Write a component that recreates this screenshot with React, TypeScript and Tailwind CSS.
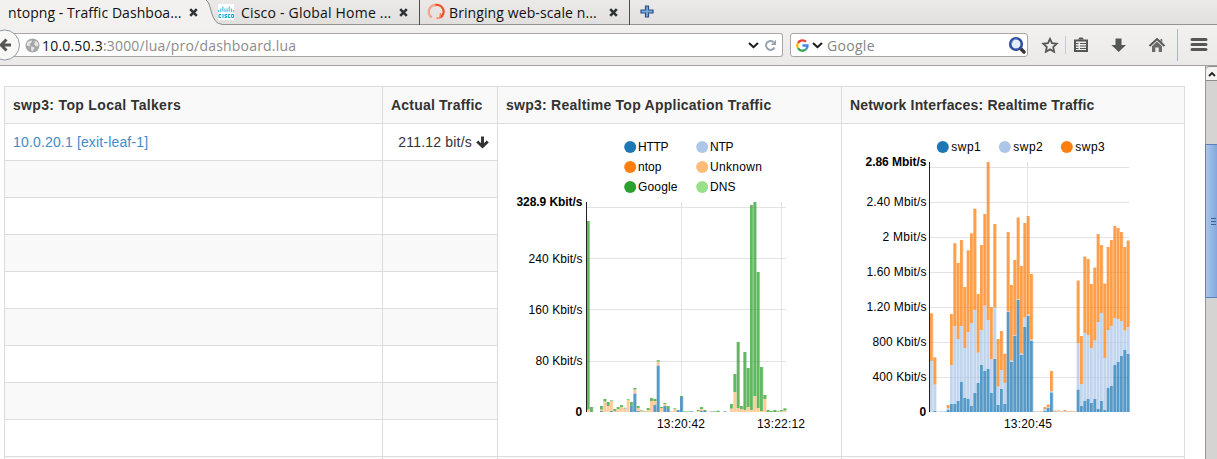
import React from "react";

type Triple = [number, number, number];

// Layer heights per sample: HTTP, Unknown, Google
const appBars: Triple[] = [
  [0, 2.5, 188.5], [0, 0, 5], [0, 0, 0], [0, 0, 0], [1, 1.5, 3.5], [0, 10.5, 2.5],
  [0, 6, 4], [1, 10, 0.7], [0, 1, 2], [0, 3, 2], [0, 5, 2], [0, 3.5, 0.7],
  [0, 12, 0.7], [6.5, 0, 3.5], [18.5, 4, 1.5], [1, 3, 2], [0, 1, 0.7], [0, 0.5, 0.5],
  [0, 2, 2], [0, 11, 3], [7, 4, 2], [46.5, 4, 1.3], [0, 4, 1], [6, 2, 1],
  [3, 0, 3], [0, 1, 0], [0, 3, 0.7], [2, 0, 0], [15, 0, 1], [0, 0, 0.6],
  [0, 0, 0.6], [0.7, 0, 0], [0, 0, 0], [0, 1, 1], [1, 2, 2], [1, 0, 1],
  [0, 0.5, 0], [0.5, 0, 0], [0, 0, 0.7], [0, 0, 1.3], [0, 0, 0], [0.7, 0, 0],
  [0, 0, 0], [0, 3.5, 4.5], [0, 20, 18], [0, 4, 66], [0, 3, 3], [0, 2, 58],
  [0, 5, 39], [0, 2, 205], [0, 16, 194], [0, 4, 136], [0, 1, 44], [0, 13, 4],
  [0, 0, 2], [0, 0, 1], [0, 0, 2], [0, 0.5, 0.7], [0, 0.7, 1.3], [0, 1.5, 2.2],
];

// Cumulative tops per sample: swp1, swp2, swp3
const ifaceTops: Triple[] = [
  [0, 51, 98.7], [1, 27.5, 54.7], [0, 0.5, 0.5], [0, 1, 1], [0, 1, 1], [2, 4, 7],
  [8, 47, 98], [8, 86, 168.7], [11, 73, 149], [30, 86, 172], [14, 64, 125], [13, 80, 161.7],
  [6, 89, 178.7], [19, 102, 203.3], [29, 59.5, 118], [47, 82, 167], [41, 106.5, 198], [43, 92, 250],
  [19, 53, 105], [53, 104.5, 188], [7, 25.5, 73], [23, 42, 81], [8, 29, 58.3], [100, 101, 180],
  [50, 51.5, 127], [76, 77, 152], [112, 113, 194.5], [57, 58.5, 146], [85, 95, 189], [96, 97.5, 196],
  [71, 72.5, 138], [0, 0.7, 1], [0, 0.5, 0.8], [0, 0.5, 1], [1, 3, 5], [4, 5, 7.5],
  [19.5, 21, 41], [0, 0.7, 1.5], [0, 0.7, 1.5], [0, 0.5, 1], [0, 1, 2], [0, 0.5, 1],
  [0, 0.5, 1], [0, 0.5, 1], [22.5, 69, 131.5], [6, 28, 76], [11, 79, 155.5], [13, 77, 153],
  [9, 64, 128], [13, 71.5, 144.5], [3, 90, 178], [11, 99, 167], [2, 54, 128.5], [24, 82, 165],
  [26, 86, 172], [47, 94, 186], [50, 93, 184], [56, 91, 180], [62, 81.5, 165], [58, 85, 171.5],
];

function Bars({ tops, colors, x, base }: { tops: Triple[]; colors: string[]; x: number; base: number }) {
  const step = 200 / 60;
  return (
    <g>
      {tops.map((t, i) => (
        <g key={i}>
          {t.map((top, j) => {
            const low = j ? t[j - 1] : 0;
            const h = top - low;
            if (h <= 0) return null;
            return (
              <React.Fragment key={j}>
                <rect x={x + i * step} y={base - top} width={2.75} height={h} fill={colors[j]} fillOpacity={0.75} />
                <rect x={x + i * step + 2.75} y={base - top} width={step - 2.75} height={h} fill={colors[j]} fillOpacity={0.42} />
              </React.Fragment>
            );
          })}
        </g>
      ))}
    </g>
  );
}

function Label({ x, y, w, bold, end, children }: { x: number; y: number; w: number; bold?: boolean; end?: boolean; children: string }) {
  return (
    <text x={end ? x - w : x} y={y} textLength={w} fontSize={12} fontWeight={bold ? 700 : 400} fill="#000">
      {children}
    </text>
  );
}

function AppChart() {
  const tops = appBars.map(([a, b, c]) => [a, a + b, a + b + c] as Triple);
  const legend: [string, number, number, number, string][] = [
    ["HTTP", 630, 147, 30.5, "#1f77b4"],
    ["NTP", 702, 147, 23.5, "#aec7e8"],
    ["ntop", 630, 167, 23.5, "#ff7f0e"],
    ["Unknown", 702, 167, 52, "#ffbb78"],
    ["Google", 630, 187, 39.5, "#2ca02c"],
    ["DNS", 702, 187, 25.5, "#98df8a"],
  ];
  return (
    <svg className="block h-[332px] w-[343px] font-['Liberation_Sans',Arial,sans-serif]" viewBox="498 124 343 332">
      {legend.map(([name, x, y, w, c]) => (
        <g key={name}>
          <circle cx={x + 0.2} cy={y} r={6} fill={c} />
          <Label x={x + 8} y={y + 4} w={w}>{name}</Label>
        </g>
      ))}
      <g stroke="#e3e3e3" shapeRendering="crispEdges">
        <path d="M587 207.5H786M587 258.5H786M587 309.5H786M587 361.5H786M681.5 202V412M781.5 202V412" />
      </g>
      <Bars tops={tops} colors={["#1f77b4", "#ffbb78", "#2ca02c"]} x={586.7} base={412} />
      <path d="M586.5 202V412" stroke="#222" shapeRendering="crispEdges" />
      <Label x={582.5} y={206} w={66} bold end>328.9 Kbit/s</Label>
      <Label x={582.5} y={262.5} w={54} end>240 Kbit/s</Label>
      <Label x={582.5} y={313.5} w={54} end>160 Kbit/s</Label>
      <Label x={582.5} y={365} w={47} end>80 Kbit/s</Label>
      <Label x={582.5} y={416} w={7} bold end>0</Label>
      <Label x={657} y={428} w={48}>13:20:42</Label>
      <Label x={757} y={428} w={48}>13:22:12</Label>
    </svg>
  );
}

function InterfaceChart() {
  const ticks: [string, number, number][] = [
    ["2.40 Mbit/s", 206, 60],
    ["2 Mbit/s", 241, 44],
    ["1.60 Mbit/s", 276, 60],
    ["1.20 Mbit/s", 311, 60],
    ["800 Kbit/s", 346, 54],
    ["400 Kbit/s", 381, 54],
  ];
  return (
    <svg className="block h-[332px] w-[342px] font-['Liberation_Sans',Arial,sans-serif]" viewBox="842 124 342 332">
      <circle cx={942.8} cy={147} r={6} fill="#1f77b4" />
      <circle cx={1004.8} cy={147} r={6} fill="#aec7e8" />
      <circle cx={1066.8} cy={147} r={6} fill="#ff7f0e" />
      <Label x={951.3} y={151} w={29.5}>swp1</Label>
      <Label x={1013.3} y={151} w={29.5}>swp2</Label>
      <Label x={1075.3} y={151} w={29.5}>swp3</Label>
      <g stroke="#e3e3e3" shapeRendering="crispEdges">
        <path d="M930 167.5H1129M930 202.5H1129M930 237.5H1129M930 272.5H1129M930 307.5H1129M930 342.5H1129M930 377.5H1129M1027.5 162V412" />
      </g>
      <Bars tops={ifaceTops} colors={["#1f77b4", "#aec7e8", "#ff7f0e"]} x={930} base={412} />
      <path d="M929.5 162V412" stroke="#222" shapeRendering="crispEdges" />
      <Label x={926.5} y={166} w={61} bold end>2.86 Mbit/s</Label>
      {ticks.map(([t, y, w]) => (
        <Label key={t} x={926.5} y={y} w={w} end>{t}</Label>
      ))}
      <Label x={926.5} y={416} w={7} bold end>0</Label>
      <Label x={1004} y={428} w={48}>13:20:45</Label>
    </svg>
  );
}

function CloseIcon() {
  return (
    <svg className="h-[9px] w-[9px] shrink-0" viewBox="0 0 9 9">
      <path d="M1.2 1.2 7.8 7.8M7.8 1.2 1.2 7.8" stroke="#2e3436" strokeWidth="2.6" />
    </svg>
  );
}

function TabBar() {
  return (
    <div className="flex h-[25px] border-b border-[#959391] bg-linear-to-b from-[#ebeae9] to-[#e1e0df] text-[14px] text-[#111]">
      <div className="relative z-10 flex h-[25px] w-[222px] shrink-0">
        <svg className="absolute inset-0 h-[25px] w-[222px]" viewBox="0 0 222 25">
          <path d="M0 0H206C212 3 211 24 222 24V25H0Z" fill="#f2f1f0" />
          <path d="M206 0C212 3 210 24 222 24.3" fill="none" stroke="#8b8987" />
        </svg>
        <div className="relative flex h-[24px] items-center pl-2">
          <span className="w-[181px] whitespace-nowrap tracking-[0.05px]">ntopng - Traffic Dashboa...</span>
          <CloseIcon />
        </div>
      </div>
      <div className="flex h-[25px] w-[203px] shrink-0 items-center border-r border-[#4f4e4d] pb-px -ml-[5px] pl-px">
        <svg className="h-4 w-4 shrink-0" viewBox="0 0 16 16">
          <path d="M0 0h16v16H0z" fill="#fff" />
          <path d="M.7 6v2M2.8 4.500v3.500M4.900 2.500v5M7 4.500v3.500M9.100 4.500v3.500M11.200 2.500v5M13.300 4.500v3.500M15.300 6v2" stroke="#30b6dc" strokeWidth="1" />
          <path d="M3 10.500H1v3h2M5 10v4M9 10.500H7V12h1.500v1.500H6.500M12.300 10.500h-2v3h2M13.600 10.500h1.800v3h-1.800z" stroke="#00aadc" strokeWidth="1" fill="none" />
        </svg>
        <span className="ml-[7px] w-[158px] whitespace-nowrap tracking-[0.2px]">Cisco - Global Home ...</span>
        <CloseIcon />
      </div>
      <div className="flex h-[25px] w-[210px] shrink-0 items-center border-r border-[#4f4e4d] pb-px pl-[7px]">
        <svg className="h-[18px] w-[18px] shrink-0" viewBox="0 0 18 18" fill="none" strokeWidth="2.300">
          <path d="M9 2A6.800 6.800 0 0 0 5 14.500" stroke="#f2a58c" />
          <path d="M5 14.500A6.800 6.800 0 0 0 11 15.500" stroke="#f6d8cc" />
          <path d="M8.500 2A6.800 6.800 0 0 1 13.300 14.500" stroke="#e9542d" />
          <path d="M13.500 10 13 15H9.500" stroke="#f0835f" strokeWidth="1.500" />
        </svg>
        <span className="ml-[4px] w-[160px] whitespace-nowrap tracking-[0.1px]">Bringing web-scale n...</span>
        <CloseIcon />
      </div>
      <svg className="mt-[5px] ml-[10px] h-[13px] w-[14px]" viewBox="0 0 14 13">
        <path d="M5.500 1h3v4H13v3H8.500v4h-3V8H1V5h4.500z" fill="#7ea5d5" stroke="#27518b" strokeWidth="1.200" />
      </svg>
    </div>
  );
}

function Chevron() {
  return (
    <svg className="h-[7px] w-[11px] shrink-0" viewBox="0 0 11 7">
      <path d="M1 1 5.500 5.200 10 1" stroke="#1a1a1a" strokeWidth="2" fill="none" />
    </svg>
  );
}

function Toolbar() {
  return (
    <div className="relative flex h-[41px] border-b border-[#a3a1a0] bg-linear-to-b from-[#f2f1f0] to-[#eceae9] text-[14px]">
      <div className="mt-2 flex h-6 w-[783px] items-center rounded-r-[3px] border border-l-0 border-[#aaa6a3] bg-white pl-[25px]">
        <svg className="h-[15px] w-[15px] shrink-0" viewBox="0 0 15 15">
          <circle cx="7.500" cy="7.500" r="7" fill="#a6a6a6" />
          <path d="M1.500 5 4 3l3-.5-.5 2-2 1.500 1 1.500-1.500 1L2 7.500zM6 8.500l3 .5.500 1.500L8 12.500 7 14l-1-3zM9.500 3l2.500.5 1.500 3-1 2-2-.5-1.500-2 1-1.500z" fill="#e4e4e4" />
        </svg>
        <span className="ml-[2px] grow whitespace-nowrap pt-px tracking-[0.2px] text-[#8b8b8b]"><span className="text-[#111]">10.0.50.3</span>:3000/lua/pro/dashboard.lua</span>
        <Chevron />
        <svg className="mr-[5px] ml-[5px] h-[13px] w-[13px] shrink-0" viewBox="0 0 13 13">
          <path d="M9.500 3A4.500 4.500 0 1 0 10.500 8.500" fill="none" stroke="#99a3b0" strokeWidth="2" />
          <path d="M12 .8V6H6.800z" fill="#99a3b0" />
        </svg>
      </div>
      <svg className="absolute top-0 left-0 h-10 w-[22px]" viewBox="0 25 22 40">
        <circle cx="4.500" cy="45" r="15" fill="#f8f8f7" stroke="#9299a5" />
        <path d="M11 45H2M6.500 39.500 1 45l5.500 5.500" fill="none" stroke="#555753" strokeWidth="3" />
      </svg>
      <div className="mt-2 ml-[7px] flex h-6 w-[238px] shrink-0 items-center rounded-[3px] border border-[#aaa6a3] bg-white pl-[5px]">
        <svg className="h-[13px] w-[13px] shrink-0" viewBox="0 0 13 13" fill="none" strokeWidth="2.300">
          <path d="M2 4A5 5 0 0 1 10 2.800" stroke="#ea4335" />
          <path d="M2 9A5 5 0 0 1 2 4" stroke="#fbbc05" />
          <path d="M10 10.300A5 5 0 0 1 2 9" stroke="#34a853" />
          <path d="M6.500 6.500H11.500A5 5 0 0 1 10 10.300" stroke="#4285f4" />
        </svg>
        <span className="ml-[3px] flex"><Chevron /></span>
        <span className="ml-[4px] grow pt-px tracking-[0.3px] text-[#858585]">Google</span>
        <svg className="mr-[1px] h-[18px] w-[18px]" viewBox="0 0 18 18">
          <path d="m12 12 4 4" stroke="#373737" strokeWidth="3.500" strokeLinecap="round" />
          <circle cx="8" cy="8" r="5.800" fill="#e4eef8" stroke="#2f4f9e" strokeWidth="2.600" />
          <path d="M4 7A4.500 4.500 0 0 1 9 3" fill="none" stroke="#7fa3de" />
        </svg>
      </div>
      <svg className="h-10 w-[189px] shrink-0" viewBox="1028 25 189 40" fill="none">
        <path d="m1050 38.800 2 4.300 4.700.6-3.500 3.300.9 4.700-4.100-2.300-4.100 2.300.9-4.700-3.500-3.300 4.700-.6z" stroke="#555753" strokeWidth="1.800" />
        <path d="M1065.500 36V54" stroke="#c3cad4" />
        <path d="M1075 40.500h12v10.500h-12z" stroke="#555753" strokeWidth="2" />
        <path d="M1078 39.500h6l-1.500-2h-3z" fill="#555753" />
        <path d="M1076 43.500h2.500M1080 43.500h6M1076 46h2.500M1080 46h6M1076 48.500h2.500M1080 48.500h6" stroke="#555753" strokeWidth="1.100" />
        <path d="M1115.500 38.500h6V45h4.500l-7.300 7-7.300-7h4.100z" fill="#555753" />
        <path d="m1149.500 46 7.500-7 7.500 7" stroke="#555753" strokeWidth="2" />
        <path d="m1157 41.500 5 4.700V52h-3.300v-4.500h-3.400V52H1152v-5.800zM1160.500 39h1.700v3.500l-1.700-1.500z" fill="#6a6b69" />
        <path d="M1177.500 29V61" stroke="#aab7cb" />
        <path d="M1192 39.500h14M1192 44.500h14M1192 49.500h14" stroke="#555753" strokeWidth="3" strokeLinecap="round" />
      </svg>
    </div>
  );
}

const talkerRows = Array.from({ length: 9 }, (_, i) => i);

function Dashboard() {
  return (
    <main className="flex h-[393px] overflow-hidden bg-white font-['Liberation_Sans',Arial,sans-serif] text-[14px] text-[#333]">
      <div className="mt-5 ml-1 h-[373px] w-[1181px] shrink-0 border-t border-l border-[#dcdcdc]">
        <div className="flex h-[37px] border-b border-[#dcdcdc] bg-[#f9f9f9] font-bold whitespace-nowrap">
          <div className="flex w-[378px] items-center border-r border-[#dcdcdc] pt-px pl-2 tracking-[0.33px]">swp3: Top Local Talkers</div>
          <div className="flex w-[115px] items-center border-r border-[#dcdcdc] pt-px pl-2 tracking-[0.2px]">Actual Traffic</div>
          <div className="flex w-[344px] items-center border-r border-[#dcdcdc] pt-px pl-2 tracking-[0.25px]">swp3: Realtime Top Application Traffic</div>
          <div className="flex w-[343px] items-center border-r border-[#dcdcdc] pt-px pl-2 tracking-[0.18px]">Network Interfaces: Realtime Traffic</div>
        </div>
        <div className="flex h-[333px] border-b border-[#dcdcdc]">
          <div className="w-[493px] border-r border-[#dcdcdc]">
            {talkerRows.map((i) => (
              <div key={i} className="flex h-[37px] border-b border-[#dcdcdc] odd:bg-white even:bg-[#f9f9f9]">
                <div className="flex w-[378px] items-center border-r border-[#dcdcdc] pt-px pl-2">
                  {i === 0 && <a className="tracking-[0.16px] text-[#428bca]">10.0.20.1 [exit-leaf-1]</a>}
                </div>
                <div className="flex grow items-center justify-end pr-2">
                  {i === 0 && (
                    <>
                      <span className="pt-px tracking-[0.2px] whitespace-nowrap">211.12 bit/s</span>
                      <svg className="ml-1 h-[13px] w-[13px]" viewBox="0 0 13 13">
                        <path d="M6.500.5V10M1.200 5.500l5.300 5 5.300-5" fill="none" stroke="#333" strokeWidth="2.900" />
                      </svg>
                    </>
                  )}
                </div>
              </div>
            ))}
          </div>
          <div className="w-[344px] border-r border-[#dcdcdc]"><AppChart /></div>
          <div className="w-[343px] border-r border-[#dcdcdc]"><InterfaceChart /></div>
        </div>
        <div className="flex h-[2px] bg-[#f9f9f9]">
          <div className="w-[378px] border-r border-[#dcdcdc]" />
          <div className="w-[115px] border-r border-[#dcdcdc]" />
          <div className="w-[344px] border-r border-[#dcdcdc]" />
          <div className="w-[343px] border-r border-[#dcdcdc]" />
        </div>
      </div>
      <div className="ml-5 flex w-3 shrink-0 flex-col border-l border-[#9a9896] bg-[#d5d4d2]">
        <div className="flex h-[15px] items-center justify-center rounded-tl border-t border-b border-[#8f8d8b] bg-[#f5f4f3]">
          <svg className="h-[6px] w-[8px]" viewBox="0 0 8 6"><path d="M1 5 4 2l3 3" fill="none" stroke="#222" strokeWidth="1.800" /></svg>
        </div>
        <div className="mt-[63px] -ml-px flex h-[154px] items-center justify-center border border-r-0 border-[#5b83bb] bg-linear-to-r from-[#a9c6ea] to-[#82a8dc] pl-[3px]">
          <div className="flex flex-col gap-[2px]">
            <div className="h-px w-[5px] bg-[#3c6496]" />
            <div className="h-px w-[5px] bg-[#3c6496]" />
            <div className="h-px w-[5px] bg-[#3c6496]" />
          </div>
        </div>
      </div>
    </main>
  );
}

export default function App() {
  return (
    <div className="h-[459px] w-[1217px] overflow-hidden bg-white font-['Open_Sans','Noto_Sans',sans-serif]">
      <TabBar />
      <Toolbar />
      <Dashboard />
    </div>
  );
}
